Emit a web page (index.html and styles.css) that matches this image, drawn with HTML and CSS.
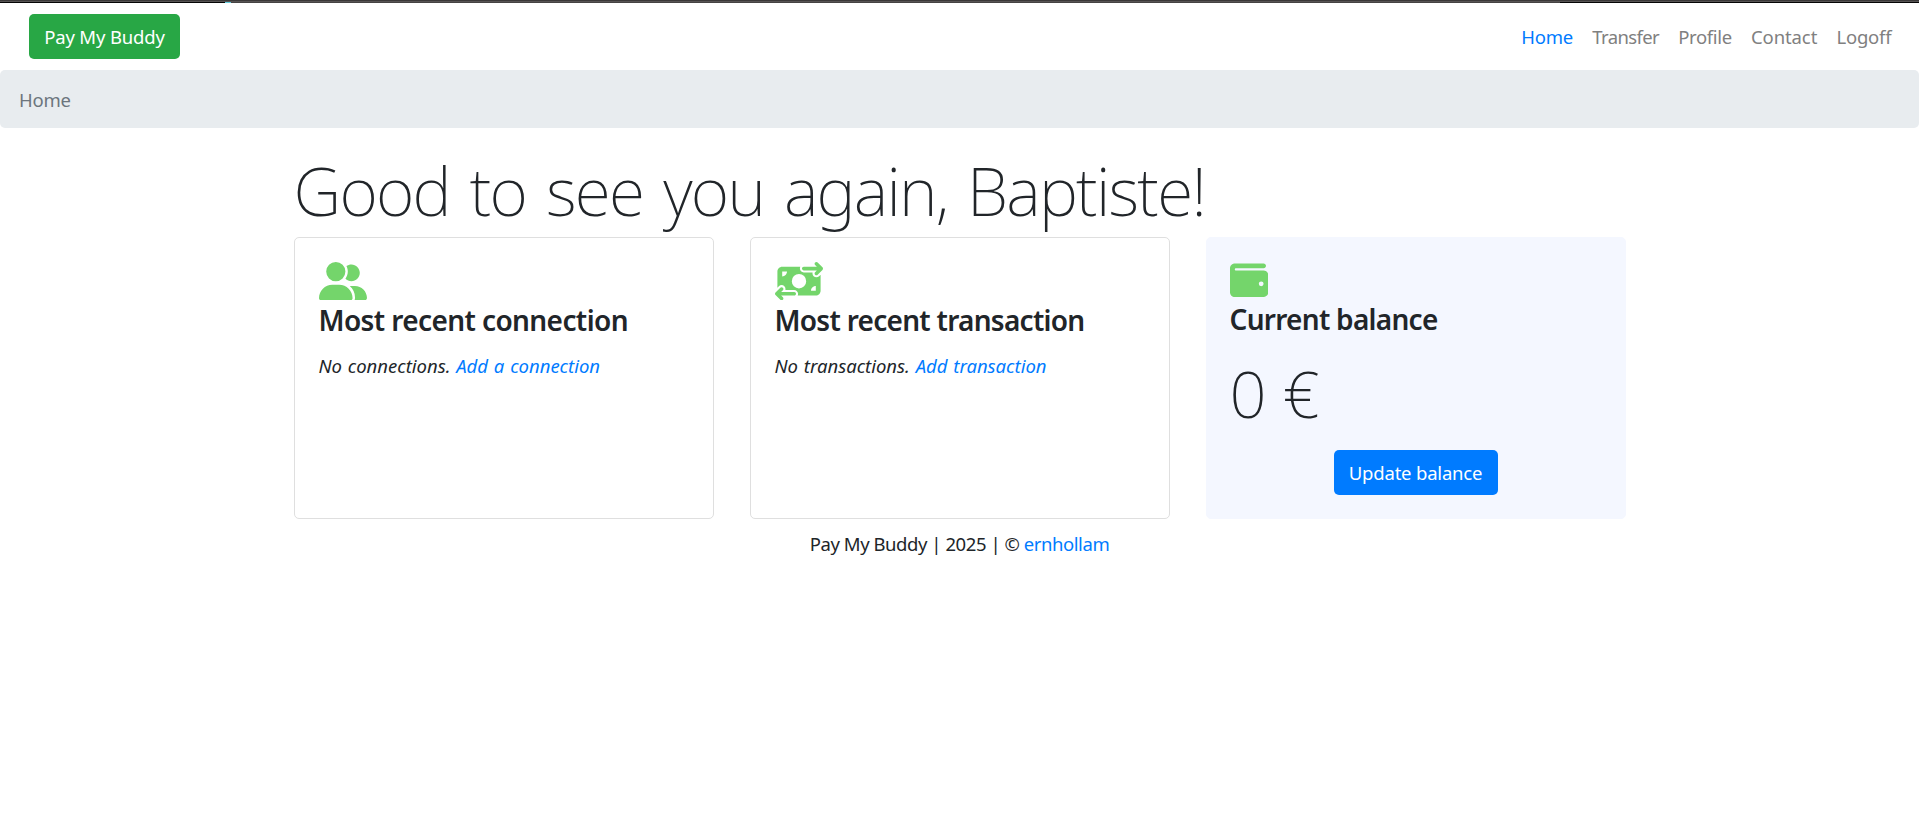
FILE: index.html
```
<!DOCTYPE html>
<html lang="en">
<head>
<meta charset="utf-8">
<title>Pay My Buddy</title>
<link rel="stylesheet" href="styles.css">
</head>
<body>
<div class="window-edge"><span class="edge-dark"></span><span class="edge-accent"></span><span class="edge-mid"></span><span class="edge-dark edge-right"></span></div>
<nav class="navbar">
  <a class="btn btn-success" href="#">Pay My Buddy</a>
  <ul class="nav-list">
    <li><a class="nav-link active" href="#">Home</a></li>
    <li><a class="nav-link transfer" href="#">Transfer</a></li>
    <li><a class="nav-link profile" href="#">Profile</a></li>
    <li><a class="nav-link contact" href="#">Contact</a></li>
    <li><a class="nav-link logoff" href="#">Logoff</a></li>
  </ul>
</nav>
<ol class="breadcrumb"><li>Home</li></ol>
<main class="container">
  <h1 class="display">Good to see you again, Baptiste!</h1>
  <div class="cards">
    <section class="card">
      <svg class="icon" viewBox="0 0 640 512" width="48" height="38.4"><path d="M96 128a128 128 0 1 1 256 0A128 128 0 1 1 96 128zM0 482.300C0 383.800 79.800 304 178.300 304l91.400 0C368.200 304 448 383.800 448 482.300c0 16.400-13.300 29.700-29.700 29.700L29.700 512C13.300 512 0 498.700 0 482.300zM609.300 512l-137.800 0c5.400-9.400 8.600-20.300 8.600-32l0-8c0-60.700-27.100-115.200-69.800-151.800c2.400-.1 4.700-.2 7.100-.2l61.400 0C567.800 320 640 392.200 640 481.300c0 17-13.800 30.700-30.700 30.700zM432 256c-31 0-59-12.600-79.300-32.900C372.400 196.500 384 163.600 384 128c0-26.800-6.600-52.100-18.300-74.300C384.300 40.100 407.200 32 432 32c61.900 0 112 50.100 112 112s-50.100 112-112 112z"/></svg>
      <h4 class="card-title">Most recent connection</h4>
      <p class="card-text"><em>No connections. <a href="#">Add a connection</a></em></p>
    </section>
    <section class="card">
      <svg class="icon" viewBox="0 0 640 512" width="48" height="38.4"><path d="M535 41c-9.400-9.400-9.400-24.600 0-33.900s24.600-9.400 33.900 0l64 64c4.500 4.500 7 10.600 7 17s-2.500 12.500-7 17l-64 64c-9.400 9.400-24.600 9.400-33.900 0s-9.400-24.600 0-33.900l23-23L384 112c-13.300 0-24-10.700-24-24s10.700-24 24-24l174.100 0L535 41zM105 377l-23 23L256 400c13.300 0 24 10.700 24 24s-10.700 24-24 24L81.900 448l23 23c9.400 9.400 9.400 24.600 0 33.900s-24.600 9.400-33.900 0L7 441c-4.500-4.500-7-10.600-7-17s2.500-12.500 7-17l64-64c9.400-9.400 24.600-9.400 33.900 0s9.400 24.600 0 33.900zM96 64l241.900 0c-3.700 7.200-5.900 15.300-5.900 24c0 28.700 23.300 52 52 52l117.400 0c-4 17 .6 35.500 13.800 48.800c20.300 20.300 53.200 20.300 73.500 0L608 169.500 608 384c0 35.300-28.700 64-64 64l-241.900 0c3.700-7.200 5.900-15.300 5.900-24c0-28.700-23.300-52-52-52l-117.400 0c4-17-.6-35.500-13.800-48.800c-20.300-20.300-53.200-20.300-73.500 0L32 342.500 32 128c0-35.300 28.700-64 64-64zm64 64l-64 0 0 64c35.300 0 64-28.700 64-64zM544 320c-35.300 0-64 28.700-64 64l64 0 0-64zM320 352a96 96 0 1 0 0-192 96 96 0 1 0 0 192z"/></svg>
      <h4 class="card-title narrow">Most recent transaction</h4>
      <p class="card-text"><em>No transactions. <a href="#">Add transaction</a></em></p>
    </section>
    <section class="card balance">
      <svg class="icon" viewBox="0 0 512 512" width="38.4" height="38.4"><path d="M64 32C28.700 32 0 60.700 0 96L0 416c0 35.300 28.700 64 64 64l384 0c35.300 0 64-28.700 64-64l0-224c0-35.300-28.700-64-64-64L80 128c-8.800 0-16-7.200-16-16s7.200-16 16-16l368 0c17.700 0 32-14.300 32-32s-14.300-32-32-32L64 32zM416 272a32 32 0 1 1 0 64 32 32 0 1 1 0-64z"/></svg>
      <h4 class="card-title narrow">Current balance</h4>
      <p class="display amount">0 €</p>
      <a class="btn btn-primary" href="#">Update balance</a>
    </section>
  </div>
</main>
<footer class="footer">Pay My Buddy | 2025 | © <a href="#">ernhollam</a></footer>
</body>
</html>
```
FILE: styles.css
```
* { box-sizing: border-box; }
body {
  margin: 0;
  background: #fff;
  color: #212529;
  font-family: "Noto Sans", "Open Sans", sans-serif;
  font-size: 18.5px;
  font-weight: 400;
  line-height: 29px;
}
a { color: #007bff; text-decoration: none; }
.window-edge { display: flex; height: 3px; border-top: 1px solid #3a3838; background: #575454; padding-top: 1px; }
.edge-dark { width: 225px; background: #050505; }
.edge-accent { width: 6px; background: #62cfe0; }
.edge-mid { flex: 1; background: #454343; }
.edge-right { width: 359px; }
.navbar {
  display: flex;
  align-items: center;
  justify-content: space-between;
  height: 67px;
  padding: 0 18px 0 29px;
}
.btn {
  display: block;
  height: 45px;
  padding: 8px 0;
  border-radius: 5px;
  color: #fff;
  text-align: center;
  white-space: nowrap;
}
.btn-success { width: 151px; background: #28a745; letter-spacing: -.15px; }
.btn-primary { width: 164px; margin: 0 auto; background: #007bff; letter-spacing: -.2px; }
.nav-list { display: flex; margin: 0; padding: 0; list-style: none; }
.nav-link { display: block; padding: 0 9.6px; color: #808080; }
.nav-link.active { color: #007bff; letter-spacing: -.2px; }
.transfer { letter-spacing: -.62px; }
.profile { letter-spacing: -.35px; }
.contact { letter-spacing: -.1px; }
.logoff { letter-spacing: -.2px; }
.breadcrumb {
  margin: 0 0 20px;
  padding: 15px 19px 14px;
  border-radius: 5px;
  background: #e8ecef;
  color: #6c757d;
  letter-spacing: -.25px;
  list-style: none;
}
.container { width: 1332px; margin: 0 auto; }
.display {
  margin: 0 0 5px;
  font-size: 66px;
  font-weight: 230;
  line-height: 84px;
  letter-spacing: -1.75px;
  word-spacing: 4.5px;
  white-space: nowrap;
}
.cards { display: grid; grid-template-columns: repeat(3, 1fr); gap: 36px; }
.card {
  height: 282px;
  padding: 23.5px 24px;
  border: 1px solid #dfdfdf;
  border-radius: 5px;
}
.balance { padding: 22.5px 23px; border-color: #f4f7ff; background: #f4f7ff; }
.icon { display: block; fill: #74d56b; }
.card-title {
  margin: 3.5px 0 12.5px;
  font-size: 28px;
  font-weight: 570;
  line-height: 35px;
  letter-spacing: -.6px;
}
.narrow { letter-spacing: -.72px; }
.card-text { margin: 0; word-spacing: 1px; }
.amount { margin: 16px 0 17px; font-size: 65px; line-height: 80px; letter-spacing: -3px; word-spacing: 5px; }
.footer { padding-top: 10px; text-align: center; letter-spacing: -.44px; }
```
